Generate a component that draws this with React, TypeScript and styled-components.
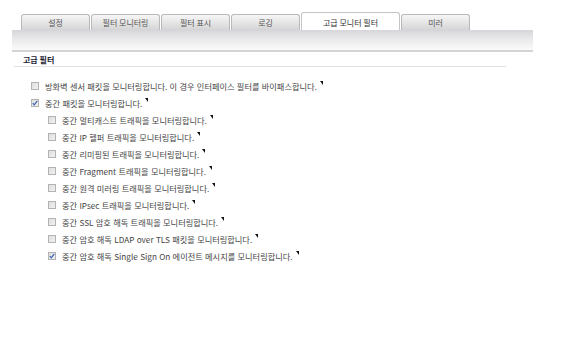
import styled, { createGlobalStyle } from "styled-components";

const GlobalStyle = createGlobalStyle`
  body {
    margin: 0;
    background: #ffffff;
    font-family: "Noto Sans CJK KR", "Noto Sans", sans-serif;
  }
`;

const tabs = ["설정", "필터 모니터링", "필터 표시", "로깅", "고급 모니터 필터", "미러"];
const activeTab = 4;

type Item = { label: string; checked: boolean; nested?: boolean };

const items: Item[] = [
  { label: "방화벽 센서 패킷을 모니터링합니다. 이 경우 인터페이스 필터를 바이패스합니다.", checked: false },
  { label: "중간 패킷을 모니터링합니다.", checked: true },
  { label: "중간 멀티캐스트 트래픽을 모니터링합니다.", checked: false, nested: true },
  { label: "중간 IP 헬퍼 트래픽을 모니터링합니다.", checked: false, nested: true },
  { label: "중간 리미핑된 트래픽을 모니터링합니다.", checked: false, nested: true },
  { label: "중간 Fragment 트래픽을 모니터링합니다.", checked: false, nested: true },
  { label: "중간 원격 미러링 트래픽을 모니터링합니다.", checked: false, nested: true },
  { label: "중간 IPsec 트래픽을 모니터링합니다.", checked: false, nested: true },
  { label: "중간 SSL 암호 해독 트래픽을 모니터링합니다.", checked: false, nested: true },
  { label: "중간 암호 해독 LDAP over TLS 패킷을 모니터링합니다.", checked: false, nested: true },
  { label: "중간 암호 해독 Single Sign On 에이전트 메시지를 모니터링합니다.", checked: true, nested: true },
];

const Page = styled.div`
  padding: 12px 0 0 12px;
`;

const TabBar = styled.div`
  display: flex;
  align-items: flex-end;
  gap: 1px;
  margin-left: 9px;
  height: 18px;
`;

const Tab = styled.div<{ $active?: boolean }>`
  box-sizing: border-box;
  width: ${(p) => (p.$active ? 99 : 69)}px;
  height: ${(p) => (p.$active ? 18 : 16)}px;
  border: 1px solid ${(p) => (p.$active ? "#c4c4c8" : "#b9b9b9")};
  border-bottom: none;
  border-radius: 3px 3px 0 0;
  background: ${(p) =>
    p.$active
      ? "#ffffff"
      : "linear-gradient(#f6f6f6 0%, #e4e4e4 55%, #d4d4d4 100%)"};
  display: flex;
  align-items: center;
  justify-content: center;
  font-size: 8px;
  color: ${(p) => (p.$active ? "#333" : "#555")};
  padding-top: ${(p) => (p.$active ? 1 : 0)}px;
`;

const Band = styled.div`
  width: 521px;
  height: 20px;
  background: linear-gradient(#d6d6da 0%, #e9e9eb 45%, #fbfbfb 100%);
  border-bottom: 2px solid #d4d4d6;
`;

const Section = styled.div`
  padding-left: 11px;
`;

const Title = styled.div`
  margin-top: 2px;
  font-size: 8px;
  font-weight: bold;
  color: #1c2333;
  height: 12px;
  line-height: 12px;
`;

const Divider = styled.div`
  margin-left: -9px;
  width: 492px;
  border-top: 1px solid #e2e2e2;
`;

const List = styled.div`
  margin-top: 10px;
  display: flex;
  flex-direction: column;
`;

const Row = styled.div<{ $nested?: boolean }>`
  display: flex;
  align-items: center;
  height: 17px;
  padding-left: ${(p) => (p.$nested ? 36 : 19)}px;
`;

const Box = styled.span`
  width: 8px;
  height: 8px;
  margin-right: 6px;
  flex: none;
  display: inline-flex;
`;

const Label = styled.span`
  font-size: 8.2px;
  word-spacing: 0.5px;
  color: #444;
  white-space: nowrap;
`;

const Mark = styled.span`
  display: inline-block;
  width: 0;
  height: 0;
  margin-left: 3px;
  vertical-align: 5px;
  border-top: 4px solid #111;
  border-left: 3px solid transparent;
`;

function CheckBox({ checked }: { checked: boolean }) {
  return (
    <Box>
      <svg width="8" height="8" viewBox="0 0 8 8">
        <defs>
          <linearGradient id="cbg" x1="0" y1="0" x2="1" y2="1">
            <stop offset="0" stopColor="#dcdcdc" />
            <stop offset="1" stopColor="#f4f4f4" />
          </linearGradient>
        </defs>
        <rect x="0.5" y="0.5" width="7" height="7" fill="url(#cbg)" stroke="#b3b3b3" />
        {checked && (
          <path d="M1.8 4.2 L3.3 5.8 L6.3 1.8" fill="none" stroke="#3b62b0" strokeWidth="1.2" />
        )}
      </svg>
    </Box>
  );
}

export default function App() {
  return (
    <Page>
      <GlobalStyle />
      <TabBar>
        {tabs.map((t, i) => (
          <Tab key={t} $active={i === activeTab}>
            {t}
          </Tab>
        ))}
      </TabBar>
      <Band />
      <Section>
        <Title>고급 필터</Title>
        <Divider />
      </Section>
      <List>
        {items.map((it) => (
          <Row key={it.label} $nested={it.nested}>
            <CheckBox checked={it.checked} />
            <Label>
              {it.label}
              <Mark />
            </Label>
          </Row>
        ))}
      </List>
    </Page>
  );
}
